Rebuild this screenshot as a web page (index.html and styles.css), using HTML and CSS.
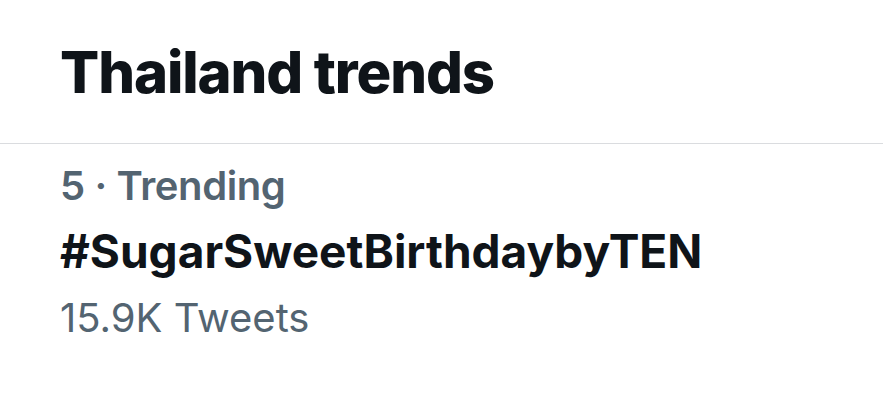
FILE: index.html
```html
<!DOCTYPE html>
<html>
<head>
<meta charset="utf-8">
<link rel="stylesheet" href="styles.css">
</head>
<body>
<section class="card">
  <header class="card-header">
    <h2 class="title">Thailand trends</h2>
  </header>
  <div class="trend">
    <div class="meta">5 · Trending</div>
    <div class="tag">#SugarSweetBirthdaybyTEN</div>
    <div class="count">15.9K Tweets</div>
  </div>
</section>
</body>
</html>
```
FILE: styles.css
```css
html, body {
  margin: 0;
  padding: 0;
  background: #ffffff;
}
body {
  font-family: Inter, "Noto Sans", "Liberation Sans", sans-serif;
  color: #0f1419;
  width: 883px;
  height: 400px;
  overflow: hidden;
}
.card-header {
  height: 143px;
  border-bottom: 1px solid #dadcdf;
  padding: 0 60px;
}
.title {
  margin: 0;
  padding-top: 38px;
  font-size: 58px;
  line-height: 68px;
  font-weight: 800;
  letter-spacing: -1.1px;
}
.trend {
  display: flex;
  flex-direction: column;
  padding: 18px 60px 0;
}
.meta {
  font-size: 40px;
  line-height: 48px;
  font-weight: 600;
  letter-spacing: -0.4px;
  color: #536471;
}
.tag {
  margin-top: 9px;
  font-size: 46px;
  line-height: 64px;
  font-weight: 700;
  color: #0f1419;
}
.count {
  margin-top: 11px;
  font-size: 40px;
  line-height: 48px;
  font-weight: 400;
  color: #536471;
}
```
